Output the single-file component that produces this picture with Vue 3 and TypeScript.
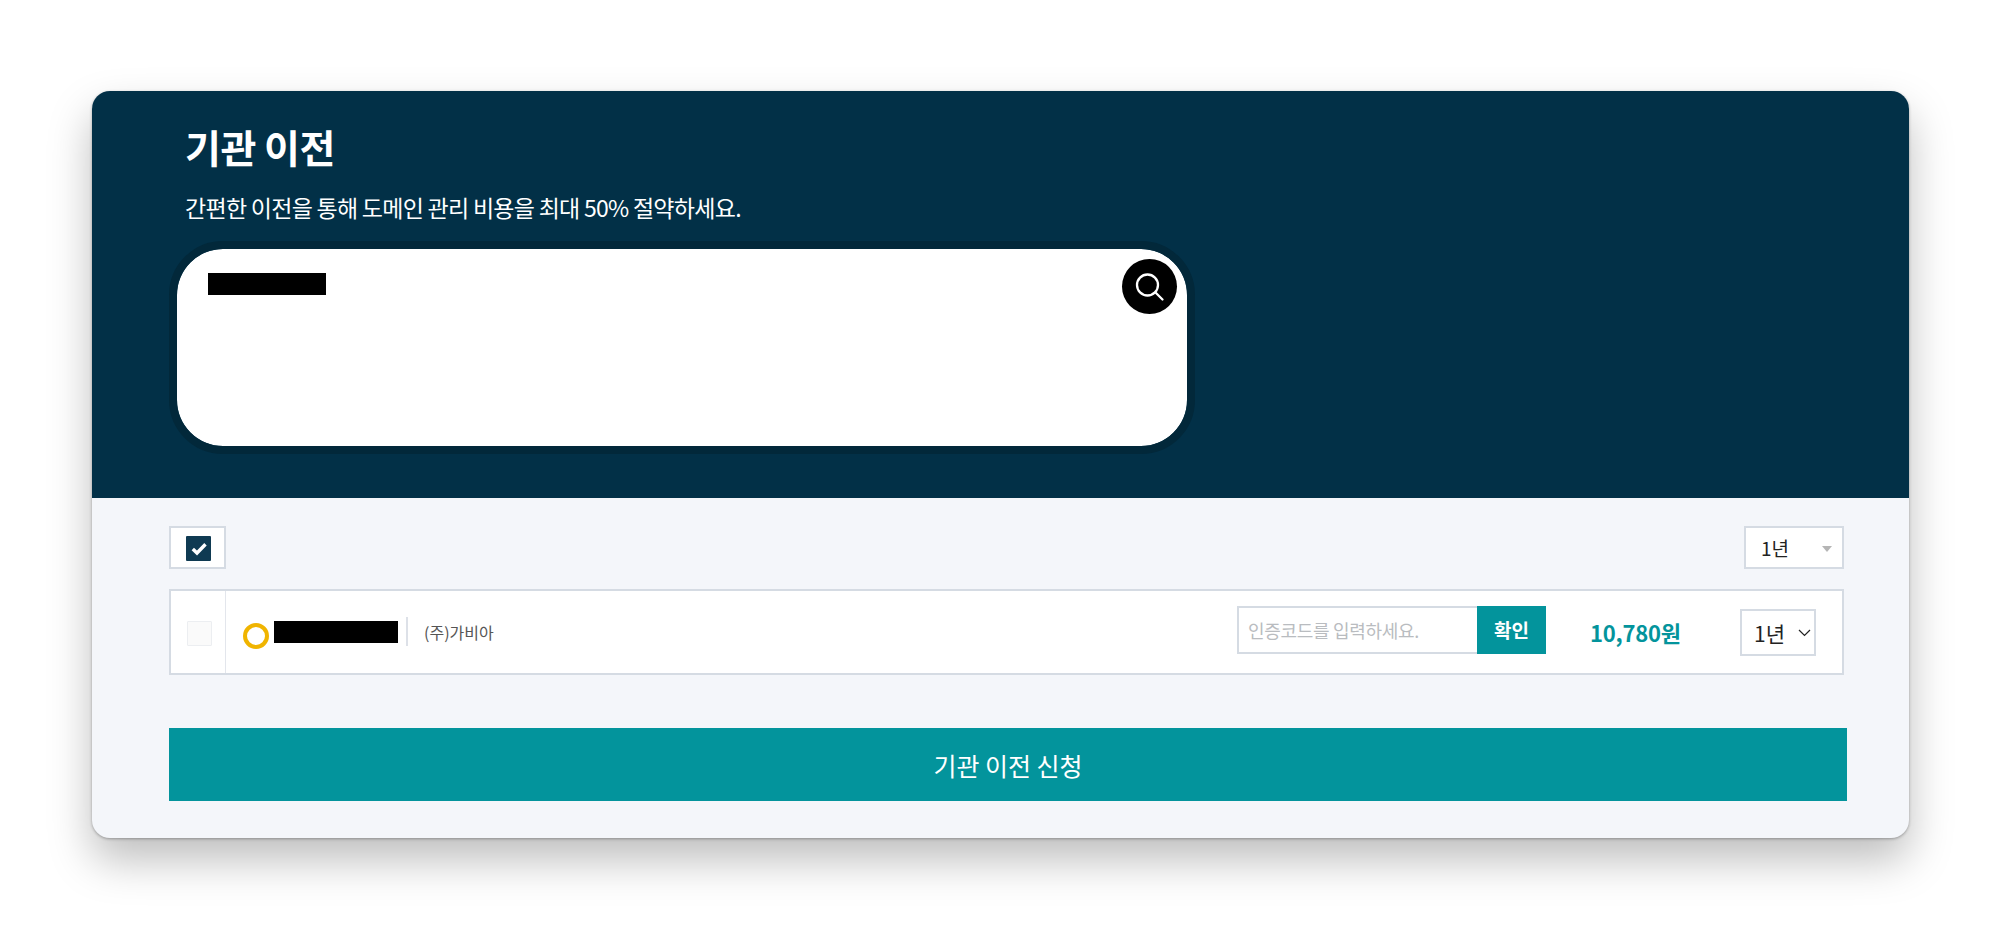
<script setup lang="ts">
import { ref } from 'vue'
const code = ref('')
const title = '기관 이전'
const subtitle = '간편한 이전을 통해 도메인 관리 비용을 최대 50% 절약하세요.'
</script>

<template>
  <div class="page">
    <section class="card">
      <header class="hero">
        <h1 class="title">{{ title }}</h1>
        <p class="subtitle">{{ subtitle }}</p>
        <div class="search">
          <div class="redact domain"></div>
          <button class="search-btn" aria-label="검색">
            <svg width="30" height="30" viewBox="0 0 30 30" fill="none" stroke="#fff" stroke-width="2.3">
              <circle cx="12.5" cy="13" r="10.5" />
              <path d="M20.5 20.5 L27.5 27.5" stroke-linecap="round" />
            </svg>
          </button>
        </div>
      </header>

      <div class="body">
        <div class="head-row">
          <div class="check-box">
            <span class="check on">
              <svg width="25" height="25" viewBox="0 0 25 25" fill="none" stroke="#fff" stroke-width="3.4">
                <path d="M6.8 13 L11 17 L19.5 8.3" />
              </svg>
            </span>
          </div>
          <div class="head-select">
            <span>1년</span>
            <i class="tri"></i>
          </div>
        </div>

        <div class="row">
          <div class="row-check"><span class="check off"></span></div>
          <div class="row-main">
            <span class="ring"></span>
            <span class="redact name"></span>
            <span class="divider"></span>
            <span class="registrar">(주)가비아</span>
            <div class="code">
              <input v-model="code" class="code-input" placeholder="인증코드를 입력하세요." />
              <button class="code-btn">확인</button>
            </div>
            <strong class="price">10,780원</strong>
            <div class="row-select">
              <span>1년</span>
              <svg width="13" height="8" viewBox="0 0 13 8" fill="none" stroke="#222" stroke-width="1.2">
                <path d="M1 1 L6.5 6.5 L12 1" />
              </svg>
            </div>
          </div>
        </div>

        <button class="submit">기관 이전 신청</button>
      </div>
    </section>
  </div>
</template>

<style>
html, body { margin: 0; background: #fff; }
</style>

<style scoped>
.page {
  height: 929px;
  box-sizing: border-box;
  padding: 91px 91px 0 92px;
  overflow: hidden;
  font-family: "Noto Sans CJK KR", "Noto Sans", sans-serif;
}
.card {
  height: 747px;
  border-radius: 18px;
  background: #f4f6fa;
  box-shadow: 0 1px 3px rgba(0,0,0,.3), 0 22px 44px rgba(0,0,0,.26);
}
.hero {
  height: 407px;
  box-sizing: border-box;
  padding: 30px 0 0 77px;
  background: #023047;
  border-radius: 18px 18px 0 0;
  color: #fff;
}
.title {
  margin: 0 0 0 16px;
  font-size: 39px;
  line-height: 50px;
  font-weight: 700;
  letter-spacing: -0.5px;
}
.subtitle {
  margin: 21px 0 0 16px;
  font-size: 23px;
  line-height: 30px;
  font-weight: 400;
  letter-spacing: -0.72px;
}
.search {
  position: relative;
  box-sizing: border-box;
  width: 1026px;
  height: 213px;
  margin-top: 19px;
  border: 8px solid #02283a;
  border-radius: 54px;
  background: #fff;
  background-clip: padding-box;
}
.redact { background: #000; display: block; }
.domain {
  position: absolute;
  top: 24px;
  left: 31px;
  width: 118px;
  height: 22px;
}
.search-btn {
  position: absolute;
  top: 10px;
  right: 10px;
  width: 55px;
  height: 55px;
  padding: 0;
  border: 0;
  border-radius: 50%;
  background: #000;
  display: flex;
  align-items: center;
  justify-content: center;
}
.body {
  padding: 28px 0 0 77px;
}
.head-row {
  display: flex;
  justify-content: space-between;
  width: 1675px;
  height: 43px;
}
.check-box {
  box-sizing: border-box;
  width: 57px;
  height: 43px;
  padding: 2px 0 0 2px;
  background: #fff;
  border: 2px solid #d5dbe3;
  display: flex;
  align-items: center;
  justify-content: center;
}
.check {
  box-sizing: border-box;
  width: 25px;
  height: 25px;
  border-radius: 1px;
  display: flex;
  align-items: center;
  justify-content: center;
}
.check.on { background: #0f3a52; }
.check.off { background: #fafafa; border: 1px solid #eceef1; }
.head-select {
  box-sizing: border-box;
  width: 100px;
  height: 43px;
  padding: 0 10px 0 15px;
  background: #fff;
  border: 2px solid #d5dbe3;
  display: flex;
  align-items: center;
  justify-content: space-between;
  font-size: 19px;
  color: #222;
}
.tri {
  width: 0;
  height: 0;
  margin-top: 2px;
  border-left: 5px solid transparent;
  border-right: 5px solid transparent;
  border-top: 6px solid #b5b5b5;
}
.row {
  box-sizing: border-box;
  display: flex;
  width: 1675px;
  height: 86px;
  margin-top: 20px;
  background: #fff;
  border: 2px solid #d5dbe3;
}
.row-check {
  box-sizing: border-box;
  width: 55px;
  padding: 2px 0 0 2px;
  border-right: 1px solid #e3e6ec;
  display: flex;
  align-items: center;
  justify-content: center;
}
.row-main {
  flex: 1;
  display: flex;
  align-items: center;
  min-width: 0;
}
.ring {
  box-sizing: border-box;
  width: 26px;
  height: 26px;
  margin: 7px 0 0 17px;
  border: 4.5px solid #f0b400;
  border-radius: 50%;
}
.name {
  width: 124px;
  height: 22px;
  margin: 0 0 1px 5px;
}
.divider {
  width: 2px;
  height: 29px;
  margin: 0 0 1px 8px;
  background: #dde1e8;
}
.registrar {
  margin-left: 16px;
  font-size: 16px;
  color: #555;
}
.code {
  display: flex;
  margin-left: auto;
  margin-top: -5px;
}
.code-input {
  box-sizing: border-box;
  width: 240px;
  height: 48px;
  padding: 0 9px;
  border: 2px solid #d5dbe3;
  border-right: 0;
  outline: 0;
  background: #fff;
  font-family: inherit;
  font-size: 18px;
  letter-spacing: -0.3px;
  color: #222;
}
.code-input::placeholder { color: #b9bcc0; opacity: 1; }
.code-btn {
  width: 69px;
  height: 48px;
  padding: 0;
  border: 0;
  background: #03949c;
  color: #fff;
  font-family: inherit;
  font-size: 19px;
  font-weight: 700;
}
.price {
  width: 91px;
  margin: 0 0 0 44px;
  font-size: 22px;
  font-weight: 700;
  color: #03949c;
  letter-spacing: -0.2px;
  white-space: nowrap;
}
.row-select {
  box-sizing: border-box;
  width: 76px;
  height: 47px;
  margin: 1px 26px 0 59px;
  padding: 0 3px 0 12px;
  border: 2px solid #d5dbe3;
  display: flex;
  align-items: center;
  justify-content: space-between;
  font-size: 21px;
  color: #222;
}
.submit {
  display: block;
  width: 1678px;
  height: 73px;
  margin-top: 53px;
  padding: 0;
  border: 0;
  background: #03949c;
  color: #fff;
  font-family: inherit;
  font-size: 25px;
  font-weight: 400;
}
</style>
